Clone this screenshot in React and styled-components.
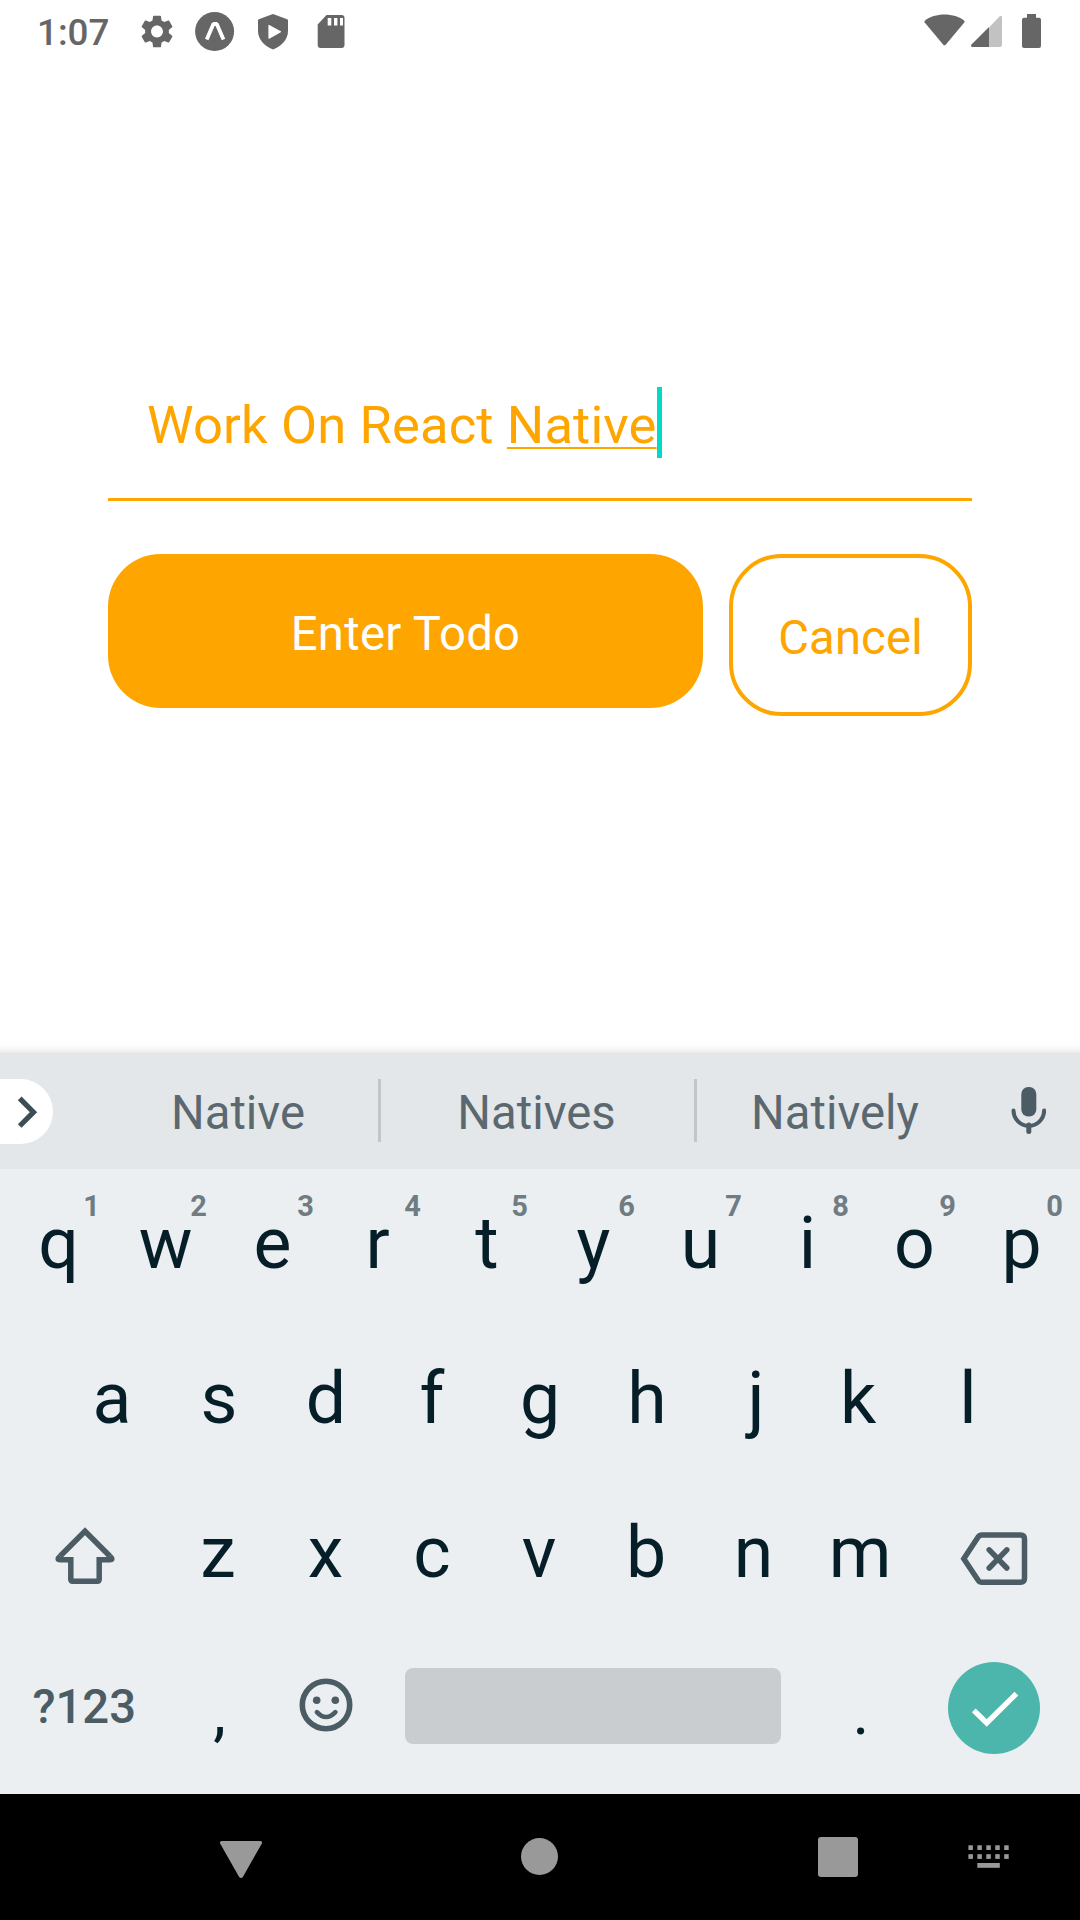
import React from "react";
import styled, { createGlobalStyle } from "styled-components";

const GlobalStyle = createGlobalStyle`
  * { box-sizing: border-box; }
  body { margin: 0; background: #fff; font-family: Roboto, "Liberation Sans", sans-serif; }
  svg { display: block; flex: none; }
`;

const ORANGE = "#ffa500";
const SLATE = "#4b5c64";
const INK = "#051e28";

const Screen = styled.div`
  width: 1080px;
  height: 1920px;
  display: flex;
  flex-direction: column;
  background: #fff;
  overflow: hidden;
`;

const StatusBar = styled.header`
  height: 63px;
  display: flex;
  align-items: center;
  justify-content: space-between;
  padding: 0 38px 1px 37px;
  color: #666;
`;
const StatusGroup = styled.div`
  display: flex;
  align-items: center;
`;
const Clock = styled.span`
  width: 98px;
  font-size: 36.75px;
  font-weight: 500;
  line-height: 43px;
  padding-top: 3px;
`;

const Content = styled.main`
  height: 990px;
  padding: 287px 108px 0;
`;
const TodoInput = styled.div`
  height: 151px;
  display: flex;
  align-items: center;
  padding-left: 39px;
  border-bottom: 3px solid ${ORANGE};
  color: ${ORANGE};
  font-size: 52.5px;
  line-height: 62px;
  letter-spacing: 0.15px;
  white-space: pre;
`;
const InputText = styled.span`
  padding-top: 2px;
`;
const Composing = styled.span`
  text-decoration: underline;
  text-decoration-thickness: 2px;
  text-underline-offset: 4px;
`;
const Caret = styled.i`
  width: 5px;
  height: 71px;
  margin-top: -3px;
  background: #03dac6;
`;
const Actions = styled.div`
  display: flex;
  align-items: flex-start;
  gap: 26px;
  margin-top: 53px;
`;
const Button = styled.button`
  width: ${(p) => (p.$outline ? 243 : 595)}px;
  height: ${(p) => (p.$outline ? 162 : 154)}px;
  padding: 6px 0 0;
  border: ${(p) => (p.$outline ? `4px solid ${ORANGE}` : "0")};
  border-radius: 52.5px;
  background: ${(p) => (p.$outline ? "#fff" : ORANGE)};
  color: ${(p) => (p.$outline ? ORANGE : "#fff")};
  font: 400 47.25px/56px Roboto, sans-serif;
  letter-spacing: ${(p) => (p.$outline ? 0.15 : 0.3)}px;
`;

const Keyboard = styled.section`
  height: 741px;
  background: #ebeff2;
  box-shadow: 0 7px 9px 8px rgba(0, 0, 0, 0.14);
`;
const Strip = styled.div`
  height: 116px;
  display: flex;
  align-items: center;
  background: #e3e7ea;
`;
const Expand = styled.div`
  width: 53px;
  height: 65px;
  margin-right: 47px;
  border-radius: 0 33px 33px 0;
  background: #fff;
`;
const Suggestion = styled.span`
  width: ${(p) => p.$width}px;
  text-align: center;
  color: #5b686f;
  font-size: 47.25px;
  line-height: 56px;
  padding: 3px 2px 0 0;
`;
const Divider = styled.i`
  width: 3px;
  height: 63px;
  margin-bottom: 1px;
  background: #c1c6ca;
`;
const MicSlot = styled.div`
  flex: 1;
  display: flex;
  justify-content: center;
  padding-left: 1px;
  margin-bottom: 1px;
`;

const Row = styled.div`
  height: 154.5px;
  display: flex;
  justify-content: center;
  align-items: center;
`;
const Key = styled.div`
  position: relative;
  width: 107px;
  height: 100%;
  display: flex;
  align-items: center;
  justify-content: center;
  padding: 0 ${(p) => Math.max(0, -(p.$nudge || 0)) * 2}px 4px ${(p) => Math.max(0, p.$nudge || 0) * 2}px;
  color: ${INK};
  font-size: 71.5px;
  line-height: 84px;
`;
const Hint = styled.sup`
  position: absolute;
  top: 20px;
  right: 12px;
  font-size: 29px;
  font-weight: 700;
  line-height: 34px;
  color: #6f7c82;
`;
const SideKey = styled.div`
  width: 160px;
  height: 100%;
  display: flex;
  align-items: center;
  justify-content: center;
  padding-top: ${(p) => p.$drop || 0}px;
  padding-right: 2px;
`;
const SymbolsKey = styled(SideKey)`
  width: 165.5px;
  padding: 0 0 5px 3px;
  color: ${SLATE};
  font-size: 47.25px;
  font-weight: 500;
`;
const PunctuationKey = styled(Key)`
  font-size: 64px;
  padding: 6px 0 0 1px;
`;
const EmojiKey = styled(Key)`
  padding-bottom: 9px;
`;
const SpaceBar = styled.div`
  width: 376px;
  height: 76px;
  margin: 0 26px 7px 25.5px;
  border-radius: 8px;
  background: #c9cdd0;
`;
const EnterKey = styled.div`
  width: 92px;
  height: 92px;
  margin: 0 40px 3px 34px;
  border-radius: 50%;
  background: #4db6ac;
`;

const NavBar = styled.nav`
  height: 126px;
  display: flex;
  align-items: center;
  background: #000;
  padding: 0 36px 0 220px;
`;
const BackSlot = styled.div`
  padding-top: 5px;
`;
const HomeDot = styled.i`
  width: 37px;
  height: 37px;
  margin: 0 260px 1px 259px;
  border-radius: 50%;
  background: #999;
`;
const RecentSquare = styled.i`
  width: 40px;
  height: 40px;
  margin-right: 110px;
  border-radius: 3px;
  background: #999;
`;

const StatusIcons = () => (
  <svg width="210" height="42" viewBox="135 10 210 42" fill="#666">
    <g transform="translate(137.2 11.7) scale(1.65)">
      <path d="M19.14 12.94c.04-.3.06-.61.06-.94 0-.32-.02-.64-.07-.94l2.03-1.58c.18-.14.23-.41.12-.61l-1.92-3.32c-.12-.22-.37-.29-.59-.22l-2.39.96c-.5-.38-1.03-.7-1.62-.94l-.36-2.54c-.04-.24-.24-.41-.48-.41h-3.84c-.24 0-.43.17-.47.41l-.36 2.54c-.59.24-1.13.57-1.62.94l-2.39-.96c-.22-.08-.47 0-.59.22L2.74 8.87c-.12.21-.08.47.12.61l2.03 1.58c-.05.3-.09.63-.09.94s.02.64.07.94l-2.03 1.58c-.18.14-.23.41-.12.61l1.92 3.32c.12.22.37.29.59.22l2.39-.96c.5.38 1.03.7 1.62.94l.36 2.54c.05.24.24.41.48.41h3.84c.24 0 .44-.17.47-.41l.36-2.54c.59-.24 1.13-.56 1.62-.94l2.39.96c.22.08.47 0 .59-.22l1.92-3.32c.12-.22.07-.47-.12-.61l-2.01-1.58zM12 15.6c-1.98 0-3.6-1.62-3.6-3.6s1.62-3.6 3.6-3.6 3.6 1.62 3.6 3.6-1.62 3.6-3.6 3.6z" />
    </g>
    <circle cx="214.600" cy="31.500" r="19.500" />
    <path d="M206.700 39.500L213.400 24H216.800L223.500 39.500" fill="none" stroke="#fff" strokeWidth="3.800" strokeLinejoin="bevel" />
    <path d="M273 14l14.200 5.200q.8.300.8 1.200v10.400c0 8.600-6 15.500-15 18.600c-9-3.100-15-10-15-18.600V20.400q0-.9.800-1.200z" />
    <path d="M269 25.500v12.600l11.500-6.300z" fill="#fff" stroke="#fff" strokeWidth="1.200" strokeLinejoin="round" />
    <path d="M326.500 15H341.500q3 0 3 3V45q0 3-3 3H320.700q-3 0-3-3V24.500z" />
    <path d="M327.700 18h3.600v7.500h-3.600zM334 18h3.400v7.500H334zM340 18h3v7.500h-3z" fill="#fff" />
  </svg>
);

const SignalIcons = () => (
  <svg width="118" height="42" viewBox="924 10 118 42" fill="#666">
    <path d="M924.800 20.700C934 12.300 955 12.300 964.200 20.700Q965 21.500 964.300 22.500L945.700 44.700Q944.500 46 943.300 44.700L924.700 22.500Q924 21.500 924.800 20.700Z" />
    <path d="M989 27.500L999.500 16.500q2.500-1.700 2.500 1.200V45q0 2-2 2H989z" fill="#c2c2c2" />
    <path d="M989 27V47H972.500q-2.300-.4-1-2.500z" />
    <path d="M1027 14h9v3.700h3q2 0 2 2V46q0 2-2 2h-15q-2 0-2-2V19.700q0-2 2-2h3z" />
  </svg>
);

const Chevron = () => (
  <svg width="53" height="65" viewBox="0 1078 53 65" fill="none" stroke="#3c4d55" strokeWidth="5.200">
    <path d="M19.700 1097.300L33.500 1111.200L19.700 1125" />
  </svg>
);

const Mic = () => (
  <svg width="35" height="48" viewBox="1010.500 1087 35 48" fill="none" stroke={SLATE}>
    <rect x="1020.800" y="1087" width="15" height="29.500" rx="7" fill={SLATE} stroke="none" />
    <path d="M1013 1110.500a15.300 15.300 0 0 0 30.600 0" strokeWidth="4" strokeLinecap="round" />
    <path d="M1028.300 1125V1131.500" strokeWidth="5" strokeLinecap="round" />
  </svg>
);

const Shift = () => (
  <svg width="62" height="60" viewBox="54 1525 62 60" fill="none" stroke={SLATE} strokeWidth="5.500">
    <path d="M60 1556.200L85 1531.200L110 1556.200" />
    <path d="M60 1556.200Q56 1559.700 60.500 1559.700H70.800V1579.300Q70.800 1581.300 72.800 1581.300H97.200Q99.200 1581.300 99.200 1579.300V1559.700H109.500Q114 1559.700 110 1556.200" />
  </svg>
);

const Backspace = () => (
  <svg width="68" height="54" viewBox="959.500 1532 68 54" fill="none" stroke={SLATE} strokeWidth="5.500">
    <path d="M981.500 1535H1020Q1024 1535 1024 1539V1578.300Q1024 1582.300 1020 1582.300H981.500Q979 1582.300 977.800 1580.500L963.300 1558.700L977.800 1536.800Q979 1535 981.500 1535Z" />
    <path d="M988.700 1549.800L1006.300 1568M1006.300 1549.800L988.700 1568" strokeLinecap="round" />
  </svg>
);

const Smiley = () => (
  <svg width="54" height="54" viewBox="298.500 1678.500 54 54" fill="none" stroke={SLATE}>
    <circle cx="325.500" cy="1705.500" r="23.700" strokeWidth="5.600" />
    <circle cx="316.200" cy="1700.700" r="3.800" fill={SLATE} stroke="none" />
    <circle cx="334.800" cy="1700.700" r="3.800" fill={SLATE} stroke="none" />
    <path d="M316.400 1712.600q9.100 9.800 18.500 0" strokeWidth="4.600" strokeLinecap="round" />
  </svg>
);

const Check = () => (
  <svg width="92" height="92" viewBox="948 1662 92 92" fill="none" stroke="#fff" strokeWidth="5.400">
    <path d="M973.800 1710.400L986.700 1723L1016.400 1693.600" />
  </svg>
);

const Back = () => (
  <svg width="42" height="38" viewBox="220 1841 42 38" fill="#999">
    <path d="M222 1841H260q3 .3 1.600 3L243 1876.700q-2 2.600-4 0L220.400 1844q-1.400-2.700 1.600-3z" />
  </svg>
);

const KeyboardSwitch = () => (
  <svg width="42" height="24" viewBox="968 1846 42 24" fill="#999">
    {[0, 1, 2, 3, 4].map((i) => (
      <React.Fragment key={i}>
        <rect x={968.4 + i * 8.95} y="1846.300" width="4.500" height="4.700" />
        <rect x={968.4 + i * 8.95} y="1855.200" width="4.500" height="4.700" />
      </React.Fragment>
    ))}
    <rect x="977.300" y="1864" width="22.500" height="4.800" />
  </svg>
);

// Optical centring of narrow and asymmetric letters, in pixels.
const NUDGE = { r: -2, f: -1, j: 2, k: -3, t: 0.5, z: -1, x: -0.5, c: -1, v: -1, b: -1, n: -0.5, m: -1 };

const LetterKey = ({ letter, hint }) => (
  <Key $nudge={NUDGE[letter]}>
    {letter}
    {hint !== undefined && <Hint>{hint}</Hint>}
  </Key>
);

export default function App() {
  return (
    <Screen>
      <GlobalStyle />
      <StatusBar>
        <StatusGroup>
          <Clock>1:07</Clock>
          <StatusIcons />
        </StatusGroup>
        <SignalIcons />
      </StatusBar>
      <Content>
        <TodoInput>
          <InputText>
            Work On React <Composing>Native</Composing>
          </InputText>
          <Caret />
        </TodoInput>
        <Actions>
          <Button>Enter Todo</Button>
          <Button $outline>Cancel</Button>
        </Actions>
      </Content>
      <Keyboard>
        <Strip>
          <Expand><Chevron /></Expand>
          <Suggestion $width={278}>Native</Suggestion>
          <Divider />
          <Suggestion $width={313}>Natives</Suggestion>
          <Divider />
          <Suggestion $width={278}>Natively</Suggestion>
          <MicSlot><Mic /></MicSlot>
        </Strip>
        <Row>
          {"qwertyuiop".split("").map((c, i) => (
            <LetterKey key={c} letter={c} hint={(i + 1) % 10} />
          ))}
        </Row>
        <Row>
          {"asdfghjkl".split("").map((c) => <LetterKey key={c} letter={c} />)}
        </Row>
        <Row>
          <SideKey><Shift /></SideKey>
          {"zxcvbnm".split("").map((c) => <LetterKey key={c} letter={c} />)}
          <SideKey $drop={7}><Backspace /></SideKey>
        </Row>
        <Row>
          <SymbolsKey>?123</SymbolsKey>
          <PunctuationKey>,</PunctuationKey>
          <EmojiKey><Smiley /></EmojiKey>
          <SpaceBar />
          <PunctuationKey>.</PunctuationKey>
          <EnterKey><Check /></EnterKey>
        </Row>
      </Keyboard>
      <NavBar>
        <BackSlot><Back /></BackSlot>
        <HomeDot />
        <RecentSquare />
        <KeyboardSwitch />
      </NavBar>
    </Screen>
  );
}
